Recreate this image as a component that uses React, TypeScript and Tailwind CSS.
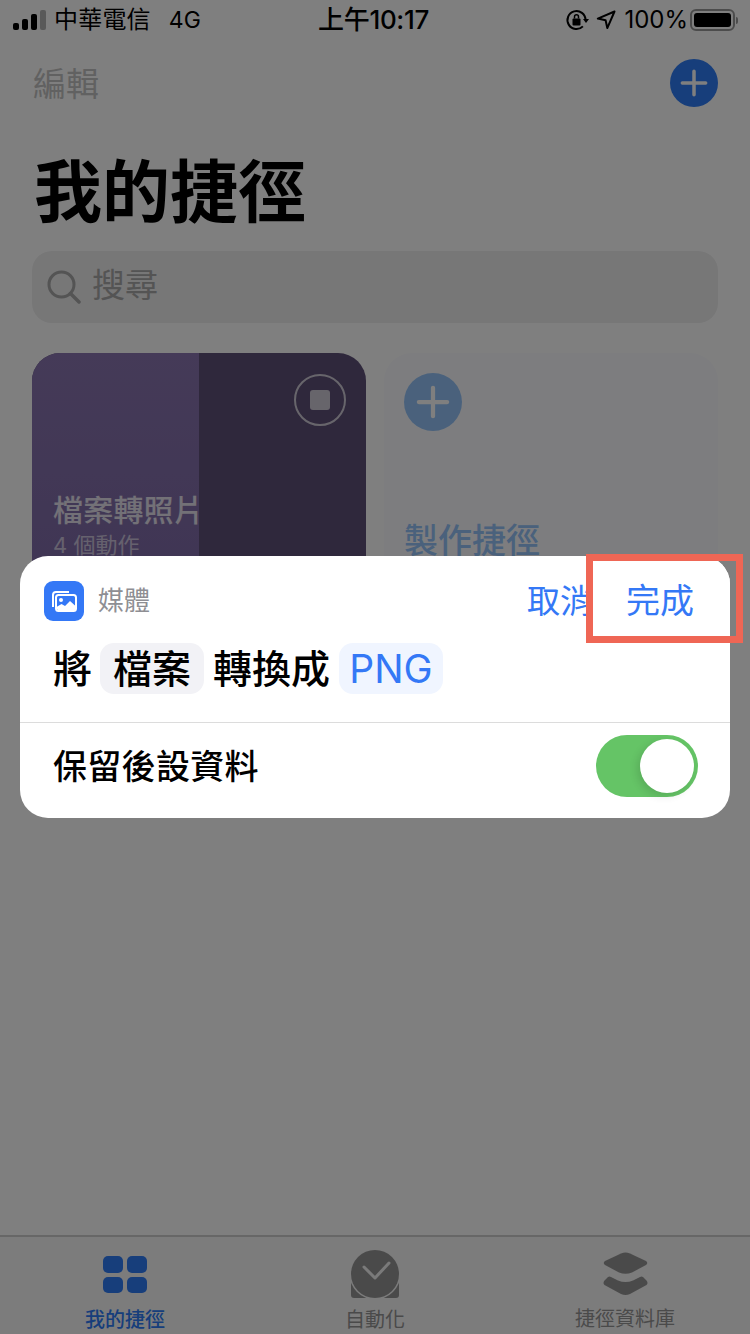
const FONT = "font-['Inter','Noto_Sans_CJK_TC',sans-serif]";

function StatusBar() {
  return (
    <div className="grid h-10 grid-cols-3 items-center pl-[13px] pr-[12px] text-black">
      <div className="flex items-center">
        <div className="flex items-end gap-[3px]">
          <span className="h-[7px] w-[6px] rounded-[2px] bg-black" />
          <span className="h-[11px] w-[6px] rounded-[2px] bg-black" />
          <span className="h-[16px] w-[6px] rounded-[2px] bg-black" />
          <span className="h-[20px] w-[6px] rounded-[2px] bg-black/30" />
        </div>
        <span className="ml-[8px] text-[24px] leading-none tracking-[0.2px]">中華電信</span>
        <span className="ml-[18px] text-[23px] leading-none">4G</span>
      </div>
      <div className="-ml-[4px] whitespace-nowrap text-center text-[26px] font-medium leading-none tracking-[-0.3px]">上午10:17</div>
      <div className="flex items-center justify-end">
        <svg width="24" height="24" viewBox="0 0 24 24" fill="none" className="mr-[7px]">
          <path d="M20.5 12a9 9 0 1 0-2.6 6.4" stroke="#000" strokeWidth="2" />
          <path d="M18 11h6l-3 4z" fill="#000" />
          <rect x="7.5" y="10.5" width="8" height="7" rx="1" fill="#000" />
          <path d="M9.5 10.5V8.8a2 2 0 0 1 4 0v1.7" stroke="#000" strokeWidth="1.5" />
        </svg>
        <svg width="20" height="20" viewBox="0 0 20 20" fill="none" className="mr-[8px]">
          <path d="M18.5 1.5 1.8 8.6l7.8 1.6 1.7 7.9z" stroke="#000" strokeWidth="2" strokeLinejoin="round" />
        </svg>
        <span className="text-[24px] leading-none">100%</span>
        <div className="ml-[2px] flex items-center">
          <div className="h-[22px] w-[45px] rounded-[6px] border-2 border-black/40 p-[2px]">
            <div className="h-full w-full rounded-[3px] bg-black" />
          </div>
          <span className="ml-[1px] h-[7px] w-[2px] rounded-r-full bg-black/40" />
        </div>
      </div>
    </div>
  );
}

function PlusIcon({ size }: { size: number }) {
  return (
    <svg width={size} height={size} viewBox="0 0 24 24" fill="none">
      <path d="M12 2v20M2 12h20" stroke="#fff" strokeWidth="3" strokeLinecap="round" />
    </svg>
  );
}

function ShortcutCards() {
  return (
    <div className="mt-[30px] flex gap-[18px] px-8">
      <div className="flex h-[240px] w-[334px] overflow-hidden rounded-[28px] bg-[#5f5079]">
        <div className="w-[167px] shrink-0 overflow-hidden bg-gradient-to-b from-[#8a75b0] to-[#7f6ba8] pl-[21px] pt-[137px]">
          <div className="whitespace-nowrap text-[30px] font-medium leading-[40px] tracking-[0.2px] text-white/80">檔案轉照片</div>
          <div className="mt-[1px] whitespace-nowrap text-[22px] leading-[28px] text-white/60">4 個動作</div>
        </div>
        <div className="flex flex-1 justify-end pr-5 pt-[21px]">
          <div className="flex h-[52px] w-[52px] items-center justify-center rounded-full border-2 border-white/70">
            <span className="h-5 w-5 rounded-[3px] bg-white/70" />
          </div>
        </div>
      </div>
      <div className="h-[240px] w-[334px] rounded-[28px] bg-[#fafbfe] pl-5 pt-5">
        <div className="flex h-[58px] w-[58px] items-center justify-center rounded-full bg-[#94c3f9]">
          <PlusIcon size={34} />
        </div>
        <div className="mt-[88px] text-[34px] font-medium leading-[44px] text-[#94c3f9]">製作捷徑</div>
      </div>
    </div>
  );
}

function TabBar() {
  return (
    <div className="mt-auto grid h-[99px] grid-cols-3 border-t-2 border-[#cfcfcf] bg-[#f8f8f8]">
      <div className="flex flex-col items-center">
        <div className="mt-[19px] grid h-[37px] w-[44px] grid-cols-2 gap-x-[4px] gap-y-[4px]">
          <span className="rounded-[5px] bg-[#2e7cf6]" />
          <span className="rounded-[5px] bg-[#2e7cf6]" />
          <span className="rounded-[5px] bg-[#2e7cf6]" />
          <span className="rounded-[5px] bg-[#2e7cf6]" />
        </div>
        <span className="mt-[14px] text-[20px] font-medium leading-[26px] text-[#2e7cf6]">我的捷徑</span>
      </div>
      <div className="flex flex-col items-center">
        <svg width="48" height="48" viewBox="0 0 48 48" className="mt-[13px]">
          <rect y="30" width="48" height="18" rx="3" fill="#959595" />
          <circle cx="24" cy="24" r="25.5" fill="#f8f8f8" />
          <circle cx="24" cy="24" r="24" fill="#959595" />
          <path d="M13 17l11 11 14-15" fill="none" stroke="#f4f4f4" strokeWidth="3" strokeLinecap="round" strokeLinejoin="round" />
        </svg>
        <span className="mt-[9px] text-[20px] leading-[26px] text-[#959595]">自動化</span>
      </div>
      <div className="flex flex-col items-center">
        <svg width="45" height="44" viewBox="0 0 45 44" className="mt-[15px]">
          <path d="M18 1.500Q22.500-.5 27 1.500L43 9Q45.500 11 43 13L29 20.500Q22.500 23 16 20.500L2 13Q-.5 11 2 9Z" fill="#959595" />
          <path d="M5 25Q6.500 24 8 25L15 28.500Q22.500 31.500 30 28.500L37 25Q38.500 24 40 25L43.500 28.500Q45.500 31 43.500 33L27 42Q22.500 44 18 42L1.500 33Q-.5 31 1.500 28.500Z" fill="#959595" />
        </svg>
        <span className="mt-[10px] text-[20px] leading-[26px] text-[#959595]">捷徑資料庫</span>
      </div>
    </div>
  );
}

function EditorCard() {
  return (
    <div className="absolute left-5 top-[556px] w-[710px] overflow-hidden rounded-[28px] bg-white">
      <div className="flex h-[87px] items-start pl-6">
        <div className="mt-[25px] flex h-10 w-10 items-center justify-center rounded-[9px] bg-[#3478f6]">
          <svg width="28" height="28" viewBox="0 0 28 28" fill="none">
            <path d="M5 19V7a3 3 0 0 1 3-3h13" stroke="#fff" strokeWidth="2" transform="translate(-2 1)" />
            <rect x="6" y="8" width="20" height="16" rx="2.500" fill="#3478f6" stroke="#fff" strokeWidth="2" />
            <circle cx="11" cy="13" r="2" fill="#fff" />
            <path d="M6.500 22v-2l5-3 3.500 2 5-5 5.500 5v3a1 1 0 0 1-1 1H8z" fill="#fff" />
          </svg>
        </div>
        <span className="ml-[14px] mt-[26px] text-[26px] leading-[38px] text-[#8e8e93]">媒體</span>
        <span className="ml-auto mt-6 whitespace-nowrap text-[33px] leading-[42px] text-[#3478f6]">取消</span>
        <div className="-ml-[3px] h-full w-[140px] shrink-0 bg-white pl-[36px] pt-6">
          <span className="whitespace-nowrap text-[34px] leading-[42px] text-[#3478f6]">完成</span>
        </div>
      </div>
      <div className="flex h-[79px] items-start pl-[33px] text-[39px] font-medium leading-[51px] text-black">
        <span>將</span>
        <span className="ml-[8px] w-[104px] rounded-[14px] bg-[#f2f2f6] text-center">檔案</span>
        <span className="ml-[9px]">轉換成</span>
        <span className="ml-[9px] w-[104px] rounded-[14px] bg-[#f0f5ff] text-center font-normal text-[#3478f6]">PNG</span>
      </div>
      <div className="flex h-[96px] items-center justify-between border-t border-[#dcdcdc] pb-[10px] pl-[33px] pr-8">
        <span className="mt-[2px] text-[34px] font-medium tracking-[0.3px] text-black">保留後設資料</span>
        <div className="flex h-[62px] w-[102px] items-center justify-end rounded-full bg-[#65c466] pr-1">
          <span className="h-[54px] w-[54px] rounded-full bg-white shadow-[-3px_3px_8px_rgba(0,0,0,0.12)]" />
        </div>
      </div>
    </div>
  );
}

export default function App() {
  return (
    <div className={`relative h-[1334px] w-[750px] overflow-hidden bg-white ${FONT}`}>
      <div className="flex h-full flex-col">
        <StatusBar />
        <div className="mt-[19px] flex h-12 items-center justify-between pl-[33px] pr-8">
          <span className="pt-[2px] text-[33px] leading-none text-[#c2c2c2]">編輯</span>
          <div className="flex h-12 w-12 items-center justify-center rounded-full bg-[#2e7cf6]">
            <PlusIcon size={28} />
          </div>
        </div>
        <h1 className="mt-[39px] pl-[34px] text-[68px] font-semibold leading-[92px] text-black">我的捷徑</h1>
        <div className="mx-8 mt-[13px] flex h-[72px] items-center rounded-[20px] bg-[#eeeeef] pl-[15px] text-[#a8a8a8]">
          <svg width="34" height="34" viewBox="0 0 34 34" fill="none">
            <circle cx="14.500" cy="14.500" r="12.500" stroke="#a8a8a8" strokeWidth="3" />
            <path d="M23.500 23.500 32 32" stroke="#a8a8a8" strokeWidth="3.500" strokeLinecap="round" />
          </svg>
          <span className="mb-1 ml-[11px] text-[33px] leading-none">搜尋</span>
        </div>
        <ShortcutCards />
        <TabBar />
      </div>
      <div className="absolute inset-0 bg-black/50" />
      <EditorCard />
      <div className="absolute left-[586px] top-[554px] h-[89px] w-[157px] border-[7px] border-[#ef6655]" />
    </div>
  );
}
